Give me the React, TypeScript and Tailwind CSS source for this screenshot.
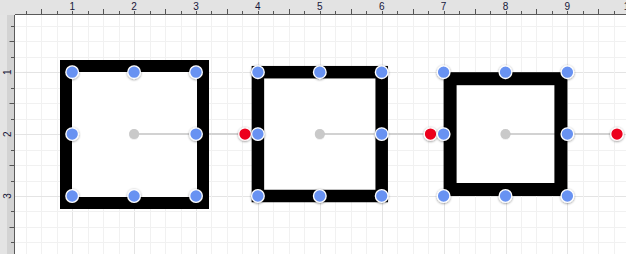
import React from "react";

const UNIT = 61.9;
const U = (n: number) => 10.3 + UNIT * n;
const Q = UNIT / 4;
const px = (v: number) => Math.round(v) + 0.5;

function TopRuler() {
  const ticks: React.ReactNode[] = [];
  for (let k = 1; k < 44; k++) {
    const x = U(0) + k * Q;
    if (x < 15 || x > 640) continue;
    const m = k % 4;
    const y1 = m === 0 ? 11 : m === 2 ? 9 : 11;
    ticks.push(<line key={k} x1={px(x)} x2={px(x)} y1={y1} y2={14} stroke="#555" strokeWidth={1} />);
  }
  const labels: React.ReactNode[] = [];
  for (let n = 1; n <= 10; n++) {
    labels.push(
      <text key={n} x={U(n)} y={10} textAnchor="middle" fontSize={10} fill="#16163a" fontFamily="'Liberation Sans', Arial, sans-serif">
        {n}
      </text>
    );
  }
  return (
    <svg className="block flex-1 h-[15px]" viewBox="15 0 611 15" width={611} height={15}>
      <rect x={15} y={0} width={611} height={15} fill="#e3e3e3" />
      {ticks}
      {labels}
      <line x1={14} x2={626} y1={14.5} y2={14.5} stroke="#5a5a5a" strokeWidth={1} />
    </svg>
  );
}

function LeftRuler() {
  const ticks: React.ReactNode[] = [];
  for (let k = 1; k < 20; k++) {
    const y = U(0) + k * Q;
    if (y < 15 || y > 254) continue;
    const m = k % 4;
    const x1 = m === 2 ? 9.5 : 11;
    if (m === 0) continue;
    ticks.push(<line key={k} y1={px(y)} y2={px(y)} x1={x1} x2={14} stroke="#555" strokeWidth={1} />);
  }
  const labels: React.ReactNode[] = [];
  for (let n = 1; n <= 3; n++) {
    labels.push(
      <text
        key={n}
        x={0}
        y={0}
        textAnchor="middle"
        fontSize={10}
        fill="#16163a"
        fontFamily="'Liberation Sans', Arial, sans-serif"
        transform={`translate(10.5 ${U(n)}) rotate(-90)`}
      >
        {n}
      </text>
    );
  }
  return (
    <svg className="block w-[15px] h-[239px]" viewBox="0 15 15 239" width={15} height={239}>
      <rect x={0} y={15} width={7} height={239} fill="#e4e4e4" />
      <rect x={7} y={15} width={8} height={239} fill="#d3d3d3" />
      {ticks}
      {labels}
      <line x1={14.5} x2={14.5} y1={14} y2={254} stroke="#5a5a5a" strokeWidth={1} />
    </svg>
  );
}

function Handle({ x, y, color = "#6892f2" }: { x: number; y: number; color?: string }) {
  return <circle cx={x} cy={y} r={6.3} fill={color} stroke="#ffffff" strokeWidth={1.3} filter="url(#hs)" />;
}

function Shape({
  a,
  rect,
  redX,
}: {
  a: number;
  rect: { x: number; y: number; w: number; h: number; sw: number };
  redX: number;
}) {
  const xs = [U(a), U(a + 1), U(a + 2)];
  const ys = [U(1), U(2), U(3)];
  const handles: React.ReactNode[] = [];
  xs.forEach((x, i) =>
    ys.forEach((y, j) => {
      if (i === 1 && j === 1) return;
      handles.push(<Handle key={`${i}-${j}`} x={x} y={y} />);
    })
  );
  return (
    <g>
      <rect x={rect.x} y={rect.y} width={rect.w} height={rect.h} fill="#ffffff" />
      <line x1={xs[1]} x2={redX} y1={U(2)} y2={U(2)} stroke="#d2d2d2" strokeWidth={2} />
      <rect x={rect.x} y={rect.y} width={rect.w} height={rect.h} fill="none" stroke="#000" strokeWidth={rect.sw} />
      <circle cx={xs[1]} cy={U(2)} r={5} fill="#c9c9c9" filter="url(#cs)" />
      {handles}
      <Handle x={redX} y={U(2)} color="#ec001f" />
    </g>
  );
}

function Canvas() {
  const lines: React.ReactNode[] = [];
  for (let k = 1; k < 44; k++) {
    const v = U(0) + k * Q;
    const major = k % 4 === 0;
    const c = major ? "#e4e4e4" : "#f1f1f1";
    if (v > 15 && v < 626) lines.push(<line key={`v${k}`} x1={px(v)} x2={px(v)} y1={15} y2={254} stroke={c} strokeWidth={1} />);
    if (v > 15 && v < 254) lines.push(<line key={`h${k}`} y1={px(v)} y2={px(v)} x1={15} x2={626} stroke={c} strokeWidth={1} />);
  }
  return (
    <svg className="block flex-1 h-[239px]" viewBox="15 15 611 239" width={611} height={239}>
      <defs>
        <filter id="hs" x="-50%" y="-50%" width="200%" height="200%">
          <feDropShadow dx="0" dy="0.6" stdDeviation="1.2" floodColor="#000" floodOpacity="0.45" />
        </filter>
        <filter id="cs" x="-50%" y="-50%" width="200%" height="200%">
          <feDropShadow dx="0" dy="0.3" stdDeviation="0.6" floodColor="#000" floodOpacity="0.2" />
        </filter>
      </defs>
      <rect x={15} y={15} width={611} height={239} fill="#ffffff" />
      {lines}
      <Shape a={1} rect={{ x: 66, y: 66, w: 137, h: 137, sw: 12 }} redX={245} />
      <Shape a={4} rect={{ x: U(4), y: U(1), w: U(6) - U(4), h: U(3) - U(1), sw: 12.5 }} redX={430.5} />
      <Shape a={7} rect={{ x: U(7) + 6.5, y: U(1) + 6.5, w: U(9) - U(7) - 13, h: U(3) - U(1) - 13, sw: 13 }} redX={617} />
    </svg>
  );
}

export default function App() {
  return (
    <div className="w-[626px] h-[254px] overflow-hidden bg-white flex flex-col">
      <div className="flex h-[15px]">
        <div className="w-[15px] h-[15px] bg-[#e3e3e3]" />
        <TopRuler />
      </div>
      <div className="flex flex-1">
        <LeftRuler />
        <Canvas />
      </div>
    </div>
  );
}
